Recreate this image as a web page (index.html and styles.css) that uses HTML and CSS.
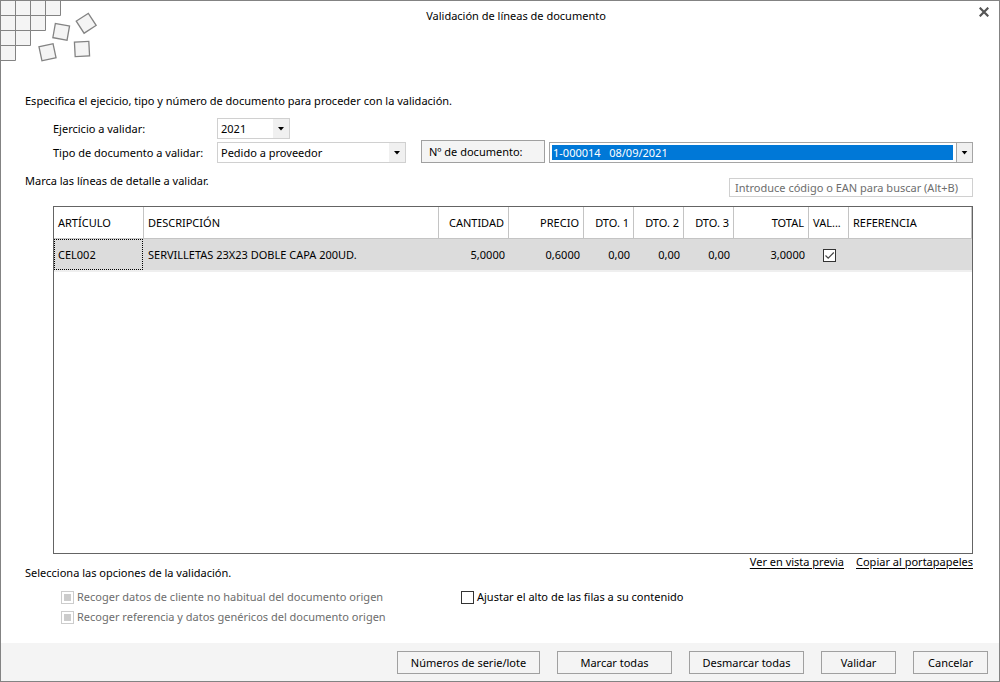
FILE: index.html
```html
<!DOCTYPE html>
<html lang="es">
<head>
<meta charset="utf-8">
<title>Validación de líneas de documento</title>
<link rel="stylesheet" href="styles.css">
</head>
<body>
<form class="dialog">
  <header class="header">
    <svg class="art" width="98" height="62" viewBox="0 0 98 62" fill="#f4f4f4" stroke="#838383" aria-hidden="true">
      <path d="M-.5-.5H59.500V14.500H44.500V29.500H29.500V44.500H14.500V59.500H-.5Z"/>
      <path fill="none" d="M-.5 14.500H44.500V-.5M-.5 29.500H29.500V-.5M-.5 44.500H14.500V-.5"/>
      <g stroke-width="1.300">
        <rect x="-7.200" y="-7.200" width="14.400" height="14.400" transform="translate(60.200 30.800) rotate(10)"/>
        <rect x="-7.200" y="-7.200" width="14.400" height="14.400" transform="translate(85.200 22.300) rotate(-33)"/>
        <rect x="-7.200" y="-7.200" width="14.400" height="14.400" transform="translate(46.500 51.300) rotate(-12)"/>
        <rect x="-7.200" y="-7.200" width="14.400" height="14.400" transform="translate(81 48) rotate(-3)"/>
      </g>
    </svg>
    <h1 class="title">Validación de líneas de documento</h1>
    <button class="close" type="button" aria-label="Cerrar">
      <svg width="10" height="10" viewBox="0 0 10 10" stroke="#555" stroke-width="2.200"><path d="M.7.700 9.300 9.300M9.300.700.700 9.300"/></svg>
    </button>
  </header>

  <main class="main">
    <p class="text">Especifica el ejecicio, tipo y número de documento para proceder con la validación.</p>
    <div class="fields">
      <div class="field-row">
        <label class="field-label" for="year">Ejercicio a validar:</label>
        <span class="combo combo-year">
          <select class="select" id="year"><option>2021</option></select>
          <svg class="arrow" viewBox="0 0 16 19"><path d="M5 8h6L8 11.500Z"/></svg>
        </span>
      </div>
      <div class="field-row">
        <label class="field-label" for="type">Tipo de documento a validar:</label>
        <span class="combo combo-type">
          <select class="select" id="type"><option>Pedido a proveedor</option></select>
          <svg class="arrow" viewBox="0 0 16 19"><path d="M5 8h6L8 11.500Z"/></svg>
        </span>
        <button class="button doc-button" type="button">Nº de documento:</button>
        <span class="combo combo-doc">
          <select class="select select-active" aria-label="Nº de documento"><option>1-000014 &nbsp; 08/09/2021</option></select>
          <svg class="arrow" viewBox="0 0 16 19"><path d="M5 8h6L8 11.500Z"/></svg>
        </span>
      </div>
    </div>

    <div class="search-row">
      <p class="text">Marca las líneas de detalle a validar.</p>
      <input class="search" type="text" aria-label="Buscar" placeholder="Introduce código o EAN para buscar (Alt+B)">
    </div>

    <div class="grid">
      <table class="table">
        <colgroup>
          <col class="c-art"><col class="c-desc"><col class="c-qty"><col class="c-num"><col class="c-dto"><col class="c-dto"><col class="c-dto"><col class="c-num"><col class="c-val"><col>
        </colgroup>
        <thead>
          <tr><th>ARTÍCULO</th><th>DESCRIPCIÓN</th><th class="num">CANTIDAD</th><th class="num">PRECIO</th><th class="num">DTO. 1</th><th class="num">DTO. 2</th><th class="num">DTO. 3</th><th class="num">TOTAL</th><th>VAL...</th><th>REFERENCIA</th></tr>
        </thead>
        <tbody>
          <tr><td class="focus-cell"><span class="focus-box">CEL002</span></td><td>SERVILLETAS 23X23 DOBLE CAPA 200UD.</td><td class="num">5,0000</td><td class="num">0,6000</td><td class="num">0,00</td><td class="num">0,00</td><td class="num">0,00</td><td class="num">3,0000</td><td class="mid"><input class="check" type="checkbox" aria-label="Validar línea" checked></td><td></td></tr>
        </tbody>
      </table>
    </div>

    <div class="after-grid">
      <p class="text">Selecciona las opciones de la validación.</p>
      <nav class="links"><a href="#preview">Ver en vista previa</a><a href="#copy">Copiar al portapapeles</a></nav>
    </div>

    <div class="options">
      <div class="option-list">
        <label class="option option-off"><input class="check" type="checkbox" disabled>Recoger datos de cliente no habitual del documento origen</label>
        <label class="option option-off"><input class="check" type="checkbox" disabled>Recoger referencia y datos genéricos del documento origen</label>
      </div>
      <label class="option"><input class="check" type="checkbox">Ajustar el alto de las filas a su contenido</label>
    </div>
  </main>

  <footer class="footer">
    <button class="button wide" type="button">Números de serie/lote</button>
    <button class="button medium" type="button">Marcar todas</button>
    <button class="button medium" type="button">Desmarcar todas</button>
    <button class="button" type="submit">Validar</button>
    <button class="button" type="button">Cancelar</button>
  </footer>
</form>
</body>
</html>
```

FILE: styles.css
```css
* { box-sizing: border-box; }

body {
  margin: 0;
  background: #fff;
  color: #000;
  font: 11px/16px "Noto Sans", "Open Sans", sans-serif;
}

button, input, select {
  margin: 0;
  font: inherit;
  color: inherit;
}

.dialog {
  display: flex;
  flex-direction: column;
  min-height: 100vh;
  border: 1px solid #838383;
}

.header {
  display: grid;
  grid-template-columns: 98px 1fr 66px;
  align-items: start;
}

.art { display: block; }

.title {
  margin: 7px 0 0;
  font-size: 11px;
  font-weight: 400;
  text-align: center;
}

.close {
  justify-self: end;
  display: grid;
  place-items: center;
  width: 30px;
  height: 22px;
  padding: 0;
  border: 0;
  background: none;
}

.main {
  flex: 1;
  display: flex;
  flex-direction: column;
  padding: 30px 26px 18px 24px;
}

.text { margin: 0; }

.fields {
  display: grid;
  gap: 1px;
  margin: 9px 0 10px 28px;
}

.field-row {
  display: flex;
  align-items: end;
}

.field-label {
  width: 164px;
  line-height: 20px;
}

.combo {
  display: grid;
  grid-template-columns: 1fr 17px;
  height: 21px;
}

.combo-year { width: 73px; }
.combo-type { width: 189px; margin-right: 15px; }
.combo-doc { flex: 1; margin-left: 4px; }

.select {
  grid-area: 1 / 1 / 2 / 3;
  appearance: none;
  min-width: 0;
  padding: 0 20px 0 3px;
  border: 1px solid #d0d0d0;
  border-radius: 0;
  background: #fff;
}

.arrow {
  grid-area: 1 / 2;
  z-index: 1;
  width: 16px;
  height: 19px;
  margin-top: 1px;
  background: #f0f0f0;
  pointer-events: none;
}

.select-active {
  border-color: #a5a5a5;
  background: linear-gradient(#0078d7, #0078d7) 2px 2px / calc(100% - 21px) calc(100% - 4px) no-repeat #fff;
  color: #fff;
}

.combo-doc .arrow { border-left: 1px solid #a5a5a5; }

.button {
  width: 75px;
  height: 23px;
  padding: 0;
  border: 1px solid #a0a0a0;
  border-radius: 0;
  background: #f4f4f4;
}

.doc-button {
  width: 124px;
  padding-left: 7px;
  text-align: left;
}

.search-row {
  display: flex;
  justify-content: space-between;
  height: 24px;
  margin-bottom: 9px;
}

.search {
  align-self: end;
  width: 244px;
  height: 19px;
  padding: 0 5px;
  border: 1px solid #d0d0d0;
}

.search::placeholder { color: #6d6d6d; opacity: 1; }

.grid {
  flex: 1;
  margin-left: 28px;
  border: 1px solid #646464;
}

.table {
  width: 100%;
  table-layout: fixed;
  border-collapse: separate;
  border-spacing: 0;
}

.c-art { width: 90px; }
.c-desc { width: 295px; }
.c-qty { width: 70px; }
.c-num { width: 75px; }
.c-dto { width: 50px; }
.c-val { width: 40px; }

.table th {
  height: 32px;
  padding: 0 4px;
  border-right: 1px solid #c4c4c4;
  border-bottom: 1px solid #c4c4c4;
  font-weight: 400;
  text-align: left;
  white-space: nowrap;
}

.table td {
  height: 33px;
  padding: 0 4px;
  border-bottom: 2px solid #efefef;
  background: #dcdcdc;
  white-space: nowrap;
}

.table .num { text-align: right; }
.table .mid { text-align: center; }
.table .focus-cell { padding: 0 1px 0 0; }

.focus-box {
  display: block;
  padding: 0 3px;
  border: 1px dotted #000;
  line-height: 29px;
}

.check {
  appearance: none;
  flex: none;
  width: 13px;
  height: 13px;
  border: 1px solid #333;
  background: #fff;
  vertical-align: middle;
}

.check:checked {
  background: url("data:image/svg+xml,%3Csvg xmlns='http://www.w3.org/2000/svg' viewBox='0 0 11 11'%3E%3Cpath d='M1.500 5.500 4.200 8.200 9.800 2.500' fill='none' stroke='%23444' stroke-width='1.200'/%3E%3C/svg%3E") #fff;
}

.check:disabled {
  border-color: #ccc;
  background: #ccc;
  box-shadow: inset 0 0 0 2px #fff;
}

.after-grid {
  display: flex;
  justify-content: space-between;
  align-items: end;
  height: 27px;
}

.links {
  display: flex;
  gap: 12px;
  align-self: start;
}

.links a {
  color: #000;
  text-underline-offset: 2px;
}

.options {
  display: flex;
  align-items: start;
  margin: 8px 0 0 36px;
}

.option-list {
  display: grid;
  gap: 4px;
  width: 400px;
}

.option {
  display: flex;
  align-items: center;
  gap: 3px;
}

.option-off { color: #6d6d6d; }

.footer {
  display: flex;
  justify-content: end;
  gap: 17px;
  padding: 8px 11px 7px;
  background: #f4f4f4;
}

.wide { width: 143px; }
.medium { width: 115px; }
```
